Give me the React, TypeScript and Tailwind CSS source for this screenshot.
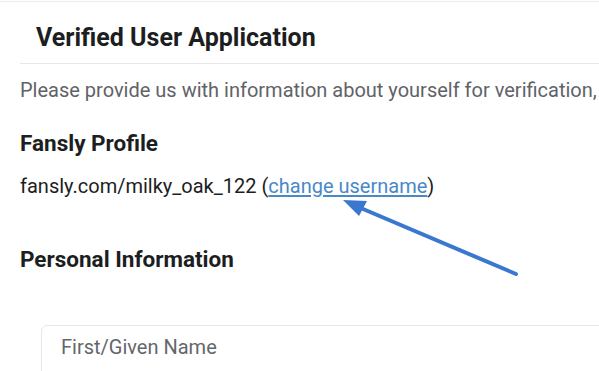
import { useState } from "react";

const App = () => {
  const [firstName, setFirstName] = useState("");

  return (
    <div
      className="relative w-full h-[371px] overflow-hidden bg-white"
      style={{ fontFamily: "Roboto, 'Noto Sans', sans-serif" }}
    >
      {/* 상단 구분선 */}
      <div className="mt-px border-t border-[#ececec]" />

      <div className="pl-5">
        {/* 제목 */}
        <div className="border-b border-[#e8e8e8] pl-4 pt-[20px] pb-[10px]">
          <h1 className="text-[25px] leading-[31px] font-bold text-[#1c1e21] whitespace-nowrap">
            Verified User Application
          </h1>
        </div>

        {/* 설명 */}
        <p className="mt-[13px] text-[20px] leading-[26px] text-[#5f6368] whitespace-nowrap">
          Please provide us with information about yourself for verification,
        </p>

        {/* 프로필 */}
        <h2 className="mt-[26px] text-[22.5px] leading-[28px] font-bold text-[#1c1e21]">
          Fansly Profile
        </h2>
        <p className="mt-[16px] text-[20px] leading-[26px] text-[#1c1e21] whitespace-nowrap">
          fansly.com/milky_oak_122 (
          <a href="#" className="text-[#4a88c7] underline underline-offset-2">
            change username
          </a>
          )
        </p>

        {/* 개인정보 */}
        <h2 className="mt-[46px] text-[22.5px] leading-[28px] font-bold text-[#1c1e21]">
          Personal Information
        </h2>

        <div className="mt-[52px] ml-[21px] -mr-4 rounded-md border border-[#e6e6e6] h-[60px] pt-[9px] px-[19px]">
          <input
            value={firstName}
            onChange={(e) => setFirstName(e.target.value)}
            placeholder="First/Given Name"
            className="w-full h-[24px] leading-[24px] bg-transparent outline-none text-[20px] text-[#333] placeholder:text-[#63676c]"
          />
        </div>
      </div>

      {/* 화살표 표시 */}
      <svg
        className="absolute left-0 top-0 pointer-events-none"
        width="599"
        height="371"
        viewBox="0 0 599 371"
      >
        <line x1="516" y1="274" x2="356" y2="206" stroke="#3a78cf" strokeWidth="4" strokeLinecap="round" />
        <polygon points="343,200 367,201 359,216" fill="#3a78cf" />
      </svg>
    </div>
  );
};

export default App;
